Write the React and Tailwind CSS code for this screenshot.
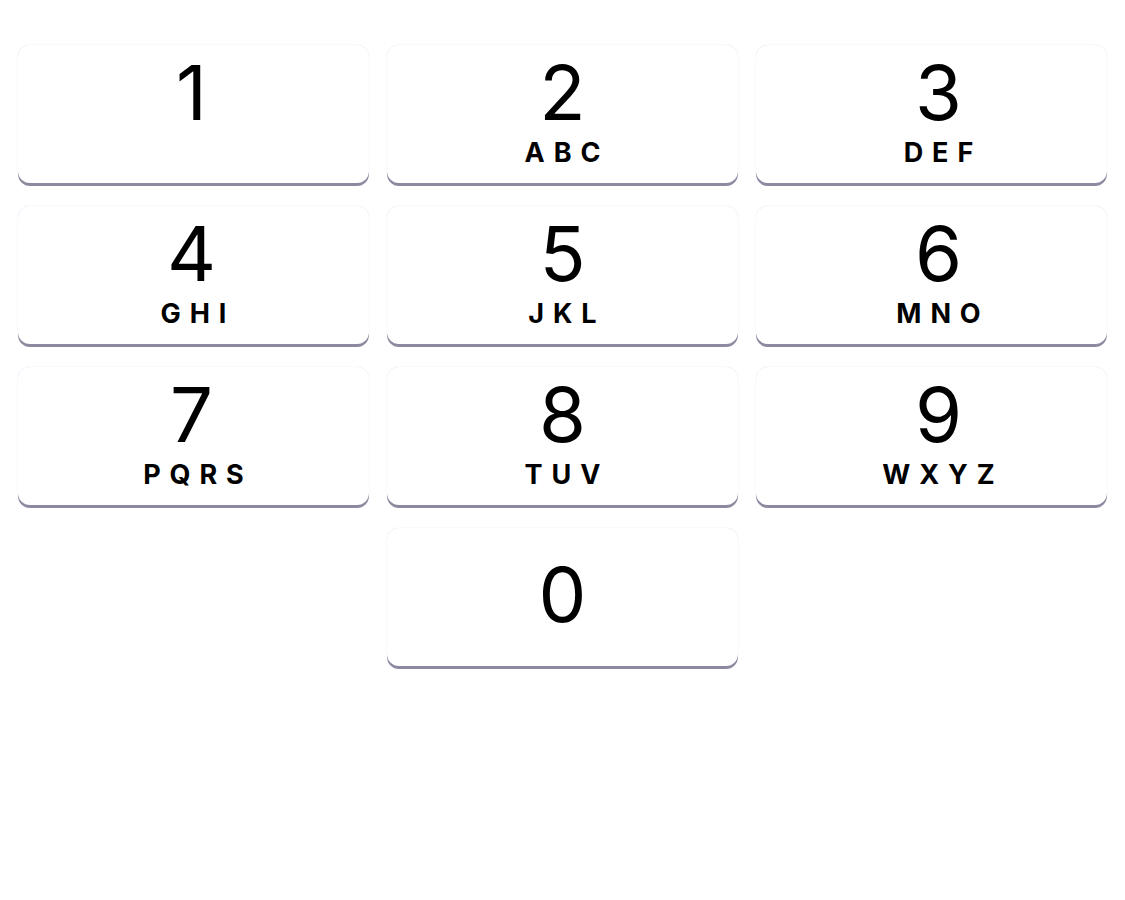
import React from "react";

const keys = [
  ["1", ""],
  ["2", "ABC"],
  ["3", "DEF"],
  ["4", "GHI"],
  ["5", "JKL"],
  ["6", "MNO"],
  ["7", "PQRS"],
  ["8", "TUV"],
  ["9", "WXYZ"],
];

function Key({ d, l, zero, col }) {
  return (
    <div
      className={`h-[138px] rounded-[12px] bg-white flex flex-col items-center shadow-[0_3px_0_0_#8c8aa0,0_0_1px_0_rgba(150,140,210,0.45)] ${
        zero ? "pt-[28px]" : "pt-[9px]"
      } ${col === 2 ? "pl-[14px]" : ""}`}
    >
      <div
        className={`text-[76px] leading-[76px] font-normal text-black ${
          col === 0 ? "-ml-[4px]" : ""
        }`}
      >
        {d}
      </div>
      {!zero && (
        <div className="mt-[10px] h-[26px] text-[27px] leading-[26px] font-bold tracking-[0.33em] pl-[0.33em] text-black">
          {l}
        </div>
      )}
    </div>
  );
}

export default function App() {
  return (
    <div
      className="w-[1125px] h-[900px] bg-white pt-[45px] px-[18px]"
      style={{ fontFamily: "Inter, 'Noto Sans', sans-serif" }}
    >
      <div className="grid grid-cols-3 gap-x-[18px] gap-y-[23px]">
        {keys.map(([d, l], i) => (
          <Key key={d} d={d} l={l} col={i % 3} />
        ))}
        <div />
        <Key d="0" zero col={1} />
        <div />
      </div>
    </div>
  );
}
